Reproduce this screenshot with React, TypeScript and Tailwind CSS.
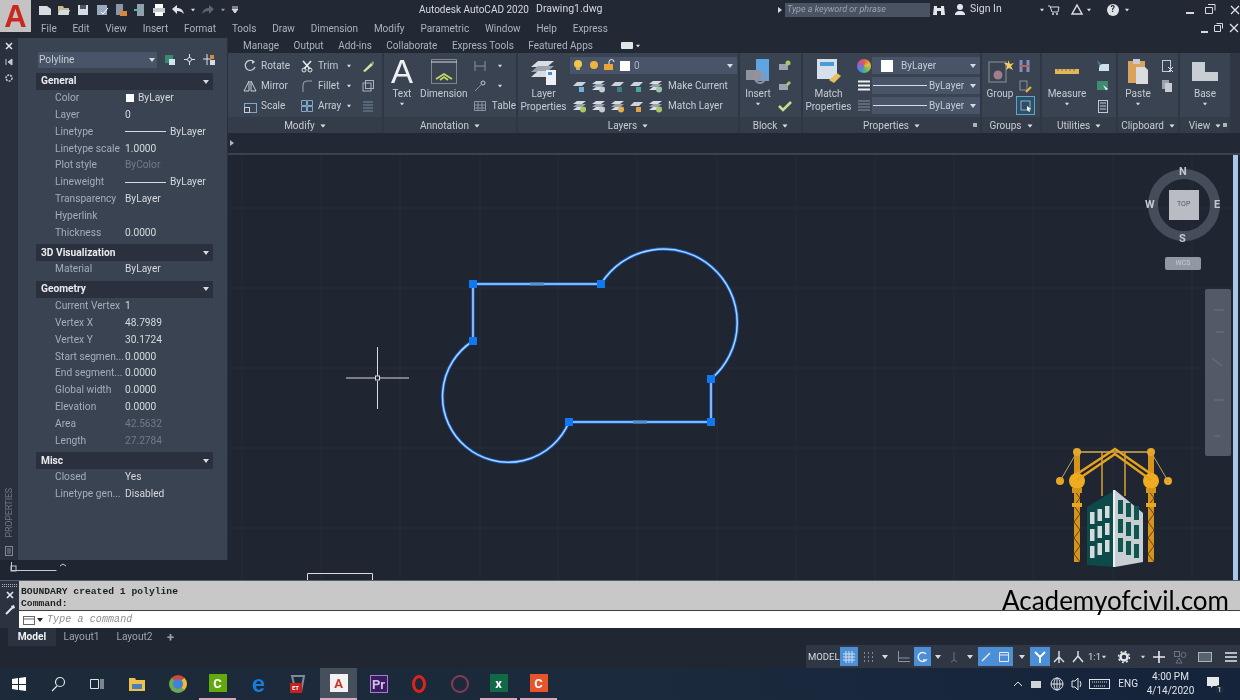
import React from "react";

type P = { children?: React.ReactNode; w?: number; h?: number; className?: string };
const S = ({ children, w = 14, h = 14, className = "" }: P) => (
  <svg width={w} height={h} viewBox={`0 0 ${w} ${h}`} fill="none" className={`shrink-0 ${className}`}>{children}</svg>
);
const Tri = ({ className = "" }: { className?: string }) => (
  <svg width="6" height="4" viewBox="0 0 6 4" className={`shrink-0 ${className}`}><path d="M0 0h6L3 4z" fill="#d7dbe0" /></svg>
);
const Stack = ({ a = "#7fb069", b = "#d8dde3" }: { a?: string; b?: string }) => (
  <S w={15} h={14}>
    <path d="M5 2h9l-4 3H1z" fill={b} /><path d="M5 5h9l-4 3H1z" fill="#9aa3ae" /><path d="M5 8h9l-4 3H1z" fill={b} />
    <circle cx="11" cy="10.5" r="3" fill={a} />
  </S>
);
const Lay = ({ a = "#66b6c8" }: { a?: string }) => (
  <S w={15} h={14}><path d="M5 3h9l-4 4H1z" fill="#cdd3da" /><rect x="7" y="8" width="5" height="5" fill={a} /></S>
);

function Tool({ icon, label, arrow, w, x = 0 }: { icon: React.ReactNode; label?: string; arrow?: boolean; w?: number; x?: number }) {
  return (
    <div className="flex h-5 items-center" style={{ width: w, marginLeft: x }}>
      <span className="flex w-[17px] shrink-0 justify-center">{icon}</span>
      {label && <span className="ml-[3px] whitespace-nowrap text-[#c6ccd4]">{label}</span>}
      {arrow && <Tri className="ml-auto mr-[7px] scale-75" />}
    </div>
  );
}
function Large({ icon, lines, arrow, w }: { icon: React.ReactNode; lines: string[]; arrow?: boolean; w: number }) {
  return (
    <div className="flex shrink-0 flex-col items-center" style={{ width: w }}>
      <div className="flex h-[31px] items-center justify-center">{icon}</div>
      {lines.map((l) => <div key={l} className="h-[13px] whitespace-nowrap leading-[13px] text-[#c6ccd4]">{l}</div>)}
      {arrow && <Tri className="mt-[2px] scale-75" />}
    </div>
  );
}
function RPanel({ title, w, children, dot, pl = 0 }: { title: string; w: number; children: React.ReactNode; dot?: boolean; pl?: number }) {
  return (
    <div className="flex h-full shrink-0 flex-col border-r-2 border-[#2f3644] bg-[#3a4352]" style={{ width: w }}>
      <div className="flex h-[64px] items-start pt-[3px]" style={{ paddingLeft: pl }}>{children}</div>
      <div className="relative flex h-[16px] items-center justify-center gap-[5px] bg-[#343c4a] pt-[1px] text-[#c6ccd4]">
        {title}<Tri className="scale-90" />
        {dot && <span className="absolute right-[3px] top-[6px] h-[4px] w-[4px] bg-[#aab2bc]" />}
      </div>
    </div>
  );
}
function Combo({ children, w }: { children: React.ReactNode; w: number }) {
  return (
    <div className="flex h-[17px] items-center bg-[#4a5468]" style={{ width: w }}>
      {children}
      <Tri className="ml-auto mr-1" />
    </div>
  );
}

const Prop = ({ l, v, dim, line, swatch }: { l: string; v?: string; dim?: boolean; line?: boolean; swatch?: boolean }) => (
  <div className="flex h-[16.8px] items-center whitespace-nowrap pl-[19px]">
    <span className="w-[70px] text-[#a4adba]">{l}</span>
    <span className={`flex items-center ${dim ? "text-[#727b8a]" : "text-[#d6dade]"}`}>
      {line && <span className="mr-[4px] block h-px w-[41px] bg-[#d8dce2]" />}
      {swatch && <span className="ml-[1px] mr-[4px] block h-[8px] w-[8px] bg-white" />}
      {v}
    </span>
  </div>
);
const Head = ({ t }: { t: string }) => (
  <div className="mt-[3px] flex h-[17px] items-center justify-between bg-[#2a303d] pl-[5px] pr-[4px] font-bold text-[#e8eaed]">
    {t}<Tri />
  </div>
);

const Bar = ({ on, w, children }: { on?: boolean; w: number; children?: React.ReactNode }) => (
  <span className={`flex h-[19px] shrink-0 items-center justify-center ${on ? "bg-[#4c8fd6]" : ""}`} style={{ width: w }}>{children}</span>
);

function Windows() {
  return (
    <S w={16} h={16}><path d="M1 3l6-1v6H1zM8 2l7-1v7H8zM1 9h6v5l-6-1zM8 9h7v6l-7-1z" fill="#fff" /></S>
  );
}
function Sq({ bg, t, c = "#fff", cls = "" }: { bg: string; t: string; c?: string; cls?: string }) {
  return <span className={`flex h-[18px] w-[18px] items-center justify-center text-[13px] font-bold leading-none ${cls}`} style={{ background: bg, color: c }}>{t}</span>;
}
const Slot = ({ x, on, u, children }: { x: number; on?: boolean; u?: boolean; children: React.ReactNode }) => (
  <span className={`flex h-[32px] w-[37px] shrink-0 items-center justify-center ${on ? "bg-[#46505c]" : ""} ${u ? "border-b-2 border-[#d9a8c0]" : ""}`} style={{ marginLeft: x }}>{children}</span>
);

function Logo() {
  const win: React.ReactNode[] = [];
  [0, 1, 2].forEach((r) => [0, 1, 2].forEach((c) => {
    const lx = 1090 + c * 7.5;
    win.push(<rect key={`l${r}${c}`} x={lx} y={512 + r * 17 - c * 3} width="4.5" height="12" fill="#d5dadd" />);
    const rx = 1118 + c * 8;
    win.push(<rect key={`r${r}${c}`} x={rx} y={500 + r * 19 + c * 3} width="5" height="14" fill="#0f5550" />);
  }));
  return (
    <g>
      {[1077, 1151].map((x) => (
        <g key={x}>
          <rect x={x - 3} y={452} width="6" height="110" fill="#d8941a" />
          <path d={`M${x - 3} 490 l6 8 l-6 8 l6 8 l-6 8 l6 8 l-6 8 l6 8 l-6 8 l6 8`} stroke="#5b4312" strokeWidth="1" />
          <rect x={x - 5} y={503} width="10" height="4" fill="#e9a822" />
          <circle cx={x} cy={452} r="4" fill="#e9a822" />
          <circle cx={x} cy={481} r="8" fill="#f0ac20" />
          <rect x={x - 5} y={488} width="10" height="5" fill="#d8941a" />
        </g>
      ))}
      <circle cx="1060" cy="481" r="4" fill="#e9a822" /><circle cx="1168" cy="481" r="4" fill="#e9a822" />
      <path d="M1077 452h74" stroke="#d9ad55" strokeWidth="1.5" />
      <path d="M1077 480L1115 454L1151 480M1077 474L1115 449L1151 474" stroke="#e5a31f" strokeWidth="2.5" />
      <path d="M1060 481L1077 452M1168 481L1151 452" stroke="#b9a26a" strokeWidth="1" />
      <path d="M1102 452v44M1125 452v44" stroke="#d8a030" strokeWidth="1.5" />
      <path d="M1087 507L1115 490V567L1087 565Z" fill="#0d4a49" />
      <path d="M1115 490L1143 513V562L1115 567Z" fill="#c9ced3" />
      <path d="M1114 490v77" stroke="#eef0f2" strokeWidth="2" />
      {win}
    </g>
  );
}

function Drawing() {
  const xs = [242, 321, 400, 480, 558, 637, 717, 796, 875, 954, 1033, 1113, 1192];
  const ys = [208, 288, 368, 448, 528];
  const shape = "M473 284H601A73.6 73.6 0 1 1 711 379V422H569A65.8 65.8 0 1 1 473 341Z";
  const grips = [[473, 284], [601, 284], [473, 341], [711, 379], [711, 422], [569, 422]];
  const mids = [[537, 284], [640, 422]];
  return (
    <svg className="absolute inset-0 h-full w-full" viewBox="228 155 1012 425" fill="none">
      {xs.map((x) => <path key={x} d={`M${x} 155V580`} stroke="#272e3b" />)}
      {ys.map((y) => <path key={y} d={`M228 ${y}H1240`} stroke="#272e3b" />)}
      <path d={shape} stroke="#0f5fc8" strokeWidth="3.4" />
      <path d={shape} stroke="#b4d2f8" strokeWidth="1.5" />
      {grips.map(([x, y]) => <rect key={`${x}${y}`} x={x - 4} y={y - 4} width="8" height="8" fill="#1278f0" />)}
      {mids.map(([x, y]) => <rect key={x} x={x - 7} y={y - 1.5} width="14" height="3" fill="#5d92c4" />)}
      <path d="M346 378H375M380 378H409M377.500 347V376M377.500 381V409" stroke="#d8dbe0" />
      <rect x="375.500" y="376" width="4" height="4" stroke="#d8dbe0" />
      <path d="M307.500 580V573.500H372.500V580" stroke="#d8dbe0" />
      <circle cx="1184" cy="205" r="31" stroke="#464d5a" strokeWidth="10" />
      <rect x="1169" y="190" width="30" height="30" fill="#b9bdc3" />
      <rect x="1205" y="289" width="26" height="167" rx="2" fill="#535a67" />
      <path d="M1214 310h10M1216 332h8M1212 358l10 8M1214 400h10M1214 436h6" stroke="#656c79" strokeWidth="1.5" />
      <Logo />
    </svg>
  );
}

export default function App() {
  const menu = ["File", "Edit", "View", "Insert", "Format", "Tools", "Draw", "Dimension", "Modify", "Parametric", "Window", "Help", "Express"];
  const tabs = ["Manage", "Output", "Add-ins", "Collaborate", "Express Tools", "Featured Apps"];
  return (
    <div className="flex h-[700px] w-[1240px] flex-col overflow-hidden bg-[#1f2531] font-['Roboto',sans-serif] text-[10px] leading-none text-[#c6ccd4] blur-[0.35px]">
      {/* title + menu */}
      <div className="flex h-[38px] shrink-0 bg-[#222935]">
        <div className="flex h-[32px] w-[31px] shrink-0 items-center justify-center bg-[#c4c2c2]">
          <span className="font-['Liberation_Sans',sans-serif] text-[31px] font-bold leading-none text-[#c8281e]">A</span>
        </div>
        <div className="flex min-w-0 flex-1 flex-col">
          <div className="flex h-[19px] items-center">
            <div className="ml-[7px] flex w-[208px] items-center gap-[5px]">
              <S w={14}><path d="M1 3h8l4 3v6H1z" fill="#d7dce2" /></S>
              <S w={14}><path d="M1 3h5l1 2h5v7H1z" fill="#c8b98e" /><path d="M3 7h10l-2 5H1z" fill="#d7dce2" /></S>
              <S w={14}><rect x="2" y="2" width="10" height="10" fill="#d7dce2" /><rect x="4" y="2" width="6" height="4" fill="#4b5563" /></S>
              <S w={14}><rect x="2" y="2" width="10" height="10" fill="#9aa8c0" /><path d="M6 9l2 2 5-6" stroke="#fff" /></S>
              <S w={14}><rect x="2" y="1" width="7" height="11" fill="#8c96a6" /><rect x="6" y="8" width="7" height="5" fill="#d9883a" /></S>
              <S w={14}><rect x="4" y="1" width="7" height="12" fill="#93a0ad" /><path d="M1 7h6" stroke="#58b6a8" strokeWidth="2" /></S>
              <S w={14}><rect x="3" y="1" width="8" height="4" fill="#fff" /><rect x="1" y="5" width="12" height="5" fill="#c8ccd2" /><rect x="3" y="9" width="8" height="4" fill="#fff" /></S>
              <S w={14}><path d="M1 6l5-4v3c4 0 6 2 7 6-2-2-4-3-7-3v3z" fill="#e0e4e8" /></S>
              <Tri className="scale-75" />
              <S w={14}><path d="M13 6L8 2v3c-4 0-6 2-7 6 2-2 4-3 7-3v3z" fill="#5b6472" /></S>
              <Tri className="scale-75 opacity-60" />
              <S w={8}><path d="M1 4h6M1 6h6L4 10z" fill="#d7dbe0" stroke="#d7dbe0" /></S>
            </div>
            <span className="ml-[173px] w-[117px] whitespace-nowrap text-[#d5d9de]">Autodesk AutoCAD 2020</span>
            <span className="w-[70px] whitespace-nowrap text-[10.5px] text-[#d5d9de]">Drawing1.dwg</span>
            <Tri className="ml-[171px] -rotate-90" />
            <div className="ml-[2px] flex h-[14px] w-[145px] items-center bg-[#4a5361] pl-[2px] text-[9px] italic text-[#9aa3b0]">Type a keyword or phrase</div>
            <S w={14} className="ml-[2px]"><path d="M2 3h3v9H1zM9 3h3l1 9H9zM5 5h4v3H5z" fill="#e3e6ea" /></S>
            <S w={14} className="ml-[7px]"><circle cx="7" cy="4" r="3" fill="#e3e6ea" /><path d="M2 12c0-3 2-4 5-4s5 1 5 4z" fill="#e3e6ea" /></S>
            <span className="ml-[3px] whitespace-nowrap text-[10.5px] text-[#d5d9de]">Sign In</span>
            <Tri className="ml-[37px] scale-75" />
            <S w={14} className="ml-[2px]"><path d="M1 3h2l2 6h6l1-5H4" stroke="#d7dbe0" /><circle cx="6" cy="11" r="1" fill="#d7dbe0" /><circle cx="10" cy="11" r="1" fill="#d7dbe0" /></S>
            <S w={14} className="ml-[9px]"><path d="M7 2l5 9H2z" stroke="#d7dbe0" strokeWidth="1.5" /></S>
            <Tri className="ml-[2px] scale-75" />
            <span className="ml-[15px] flex h-[12px] w-[12px] items-center justify-center rounded-full bg-[#dfe3e7] text-[9px] font-bold text-[#222935]">?</span>
            <Tri className="ml-[5px] scale-75" />
            <span className="ml-auto block h-[2px] w-[8px] translate-y-[3px] bg-[#d7dbe0]" />
            <S w={12} className="ml-[10px]"><path d="M4 1.500h7v6M1.500 4.500h7v6h-7z" stroke="#d7dbe0" /></S>
            <S w={10} h={10} className="ml-[14px]"><path d="M1 1l8 8M9 1l-8 8" stroke="#e3e6ea" strokeWidth="1.2" /></S>
          </div>
          <div className="flex h-[19px] items-center">
            <div className="ml-[10px] flex gap-[15.8px] whitespace-nowrap text-[#aab3bf]">
              {menu.map((m) => <span key={m}>{m}</span>)}
            </div>
            <span className="ml-auto block h-[2px] w-[7px] translate-y-[3px] bg-[#d7dbe0]" />
            <S w={11} className="ml-[5px]"><path d="M3.500 1.500h6v5M1.500 3.500h6v6h-6z" stroke="#d7dbe0" /></S>
            <S w={12} className="ml-[4px]"><path d="M2 2l8 8M10 2l-8 8" stroke="#e3e6ea" strokeWidth="1.2" /></S>
          </div>
        </div>
      </div>

      {/* main */}
      <div className="flex min-h-0 flex-1">
        {/* palette */}
        <div className="flex w-[228px] shrink-0 flex-col">
          <div className="flex h-[522px] border-r border-[#2a303c]">
            <div className="flex w-[18px] shrink-0 flex-col items-center bg-[#2a313e] pt-[3px]">
              <S w={10} h={10}><path d="M2 2l6 6M8 2l-6 6" stroke="#e3e6ea" strokeWidth="1.5" /></S>
              <S w={10} h={10} className="mt-[6px]"><path d="M2 2v6M8 2L4 5l4 3z" fill="#c4cad2" stroke="#c4cad2" /></S>
              <S w={10} h={10} className="mt-[6px]"><circle cx="5" cy="5" r="3" stroke="#c4cad2" strokeWidth="1.5" strokeDasharray="2 1" /></S>
              <div className="mt-auto flex flex-col items-center">
                <span className="mb-[8px] rotate-180 whitespace-nowrap text-[9px] tracking-tight text-[#6f7887] [writing-mode:vertical-rl]">PROPERTIES</span>
                <S w={10} h={12} className="mb-[3px]"><rect x="1.500" y="1.500" width="7" height="9" stroke="#7e8794" /><path d="M3 4h4M3 6h4M3 8h4" stroke="#7e8794" /></S>
              </div>
            </div>
            <div className="w-[209px] bg-[#3a4352] text-[10.2px]">
              <div className="ml-[20px] mt-[14px] flex h-[16px] items-center">
                <div className="flex h-[16px] w-[119px] items-center bg-[#4a5468] pl-[1px] text-[#c6ccd4]">Polyline<Tri className="ml-auto mr-[2px]" /></div>
                <S w={14} className="ml-[6px]"><rect x="2" y="2" width="8" height="8" fill="#3a8a72" /><rect x="6" y="6" width="6" height="6" fill="#cfe4ef" /></S>
                <S w={13} className="ml-[6px]"><path d="M6.500 1v11M1 6.500h11" stroke="#dfe3e7" /><circle cx="6.500" cy="6.500" r="2" fill="#3a4352" stroke="#dfe3e7" /></S>
                <S w={14} className="ml-[6px]"><path d="M5 1v11M1 6h8" stroke="#dfe3e7" /><rect x="8" y="2" width="4" height="4" fill="#d9883a" /><rect x="8" y="7" width="5" height="5" fill="#d7dbe0" /></S>
              </div>
              <div className="ml-[18px] mt-[5px] w-[177px]">
                <Head t="General" />
                <Prop l="Color" v="ByLayer" swatch />
                <Prop l="Layer" v="0" />
                <Prop l="Linetype" v="ByLayer" line />
                <Prop l="Linetype scale" v="1.0000" />
                <Prop l="Plot style" v="ByColor" dim />
                <Prop l="Lineweight" v="ByLayer" line />
                <Prop l="Transparency" v="ByLayer" />
                <Prop l="Hyperlink" />
                <Prop l="Thickness" v="0.0000" />
                <Head t="3D Visualization" />
                <Prop l="Material" v="ByLayer" />
                <Head t="Geometry" />
                <Prop l="Current Vertex" v="1" />
                <Prop l="Vertex X" v="48.7989" />
                <Prop l="Vertex Y" v="30.1724" />
                <Prop l="Start segmen..." v="0.0000" />
                <Prop l="End segment..." v="0.0000" />
                <Prop l="Global width" v="0.0000" />
                <Prop l="Elevation" v="0.0000" />
                <Prop l="Area" v="42.5632" dim />
                <Prop l="Length" v="27.2784" dim />
                <Head t="Misc" />
                <Prop l="Closed" v="Yes" />
                <Prop l="Linetype gen..." v="Disabled" />
              </div>
            </div>
          </div>
          <div className="h-[20px] pl-[8px] pt-[1px]">
            <S w={60} h={12}><path d="M3.500 1v8.500h8M3.500 9.500h45" stroke="#c4cad2" /><path d="M52 5l3-2 3 2" stroke="#c4cad2" /><rect x="3" y="5" width="5" height="5" stroke="#c4cad2" /></S>
          </div>
        </div>

        {/* right column */}
        <div className="flex min-w-0 flex-1 flex-col">
          <div className="flex h-[15px] shrink-0 items-center bg-[#222935] pl-[15px] text-[#aab3bf]">
            <div className="flex gap-[14.5px] whitespace-nowrap">{tabs.map((t) => <span key={t}>{t}</span>)}</div>
            <span className="ml-[28px] block h-[7px] w-[12px] rounded-[1px] bg-[#e0e4e8]" />
            <Tri className="ml-[2px] scale-75" />
          </div>
          {/* ribbon */}
          <div className="flex h-[80px] shrink-0 bg-[#2f3644] pr-[8px]">
            <RPanel title="Modify" w={156} pl={13}>
              <div className="flex flex-col">
                <Tool w={57} icon={<S><path d="M11 3a5 5 0 1 0 1 5" stroke="#c8cdd4" strokeWidth="1.3" /><path d="M9 1l3 2-3 2" fill="#c8cdd4" /></S>} label="Rotate" />
                <Tool w={57} icon={<S><path d="M6 2v10H1zM8 2v10h5z" stroke="#c8cdd4" /></S>} label="Mirror" />
                <Tool w={57} icon={<S><rect x="1.500" y="4.500" width="12" height="9" stroke="#7fa8cc" /><rect x="1.500" y="8.500" width="5" height="5" stroke="#c8cdd4" /></S>} label="Scale" />
              </div>
              <div className="flex flex-col">
                <Tool w={61} icon={<S><path d="M3 2l7 8M11 2l-7 8" stroke="#e6e9ec" strokeWidth="1.6" /><circle cx="4" cy="11" r="2" stroke="#e6e9ec" /><circle cx="10" cy="11" r="2" stroke="#e6e9ec" /></S>} label="Trim" arrow />
                <Tool w={61} icon={<S><path d="M3 13V6q0-4 4-4h5" stroke="#9aa3ae" /></S>} label="Fillet" arrow />
                <Tool w={61} icon={<S><path d="M1.500 1.500h5v5h-5zM7.500 1.500h5v5h-5zM1.500 7.500h5v5h-5zM7.500 7.500h5v5h-5z" stroke="#7fa8cc" /></S>} label="Array" arrow />
              </div>
              <div className="flex flex-col">
                <Tool icon={<S><path d="M2 12L10 4l2 2-8 7z" fill="#d8e0a0" /><path d="M10 4l2-2 1 2-1 2z" fill="#7fb069" /></S>} />
                <Tool icon={<S><rect x="2" y="4" width="8" height="8" stroke="#aab2bc" /><rect x="4.500" y="1.500" width="8" height="8" stroke="#aab2bc" /></S>} />
                <Tool icon={<S><path d="M2 3h10M2 6h10M2 9h10M2 12h10" stroke="#6e8c9a" /></S>} />
              </div>
            </RPanel>
            <RPanel title="Annotation" w={134} pl={3}>
              <div className="flex w-[30px] flex-col items-center">
                <span className="h-[31px] font-['Liberation_Sans',sans-serif] text-[33px] leading-[31px] text-[#eef0f2]">A</span>
                <span className="h-[13px] leading-[13px]">Text</span>
                <Tri className="mt-[2px] scale-75" />
              </div>
              <Large w={54} lines={["Dimension"]} icon={<S w={28} h={27}><rect x="1.500" y="1.500" width="25" height="24" stroke="#80868f" /><path d="M1 4h26" stroke="#d7dbe0" /><path d="M6 21l8-5 8 5M10 22l4-3 4 3" stroke="#c4d860" strokeWidth="1.8" /></S>} />
              <div className="ml-[1px] flex flex-col">
                <Tool icon={<S><path d="M2 2v10M12 2v10M2 7h10" stroke="#8a929e" /></S>} arrow w={38} />
                <Tool icon={<S><circle cx="10" cy="4" r="2" stroke="#c4cad2" /><path d="M2 12l6-6" stroke="#8a929e" /></S>} arrow w={38} />
                <Tool icon={<S><path d="M1.500 2.500h11v9h-11zM1.500 6h11M1.500 9h11M5 3v8M9 3v8" stroke="#8a929e" /></S>} label="Table" />
              </div>
            </RPanel>
            <RPanel title="Layers" w={222}>
              <Large w={51} lines={["Layer", "Properties"]} icon={<S w={28} h={28}><path d="M8 3h16l-7 6H1z" fill="#d8dde3" /><path d="M8 8h16l-7 6H1z" fill="#9aa3ae" /><path d="M8 13h16l-7 6H1z" fill="#d8dde3" /><rect x="16" y="12" width="10" height="15" fill="#edf1f5" /><rect x="18" y="14" width="4" height="3" fill="#3f8fd8" /></S>} />
              <div className="flex flex-col">
                <div className="flex h-[20px] items-start pl-[1px] pt-[1px]">
                  <Combo w={167}>
                    <S w={12} className="ml-[2px]"><circle cx="6" cy="5" r="4" fill="#f3c64a" /><rect x="4" y="9" width="4" height="2" fill="#c9b36a" /></S>
                    <S w={12} className="ml-[4px]"><circle cx="6" cy="6" r="4" fill="#efb43c" /></S>
                    <S w={12} className="ml-[3px]"><rect x="1" y="5" width="9" height="6" fill="#e9a53a" /><path d="M6 5V3a2.500 2.500 0 0 1 5 0" stroke="#e6e9ec" /></S>
                    <span className="ml-[5px] block h-[10px] w-[10px] bg-white" />
                    <span className="ml-[4px] text-[#aab2bc]">0</span>
                  </Combo>
                </div>
                <div className="flex h-5 items-center gap-[4px] pl-[3px]">
                  <Lay a="#6fb1d8" /><Stack a="#c7ccd2" /><Lay a="#3d7f8a" /><Lay a="#4aa59b" /><Stack a="#9cc7a6" />
                  <span className="ml-[1px] whitespace-nowrap">Make Current</span>
                </div>
                <div className="flex h-5 items-center gap-[4px] pl-[3px]">
                  <Stack a="#a8c86a" /><Stack a="#c7ccd2" /><Stack a="#e0b050" /><Lay a="#e0a050" /><Stack a="#a8c86a" />
                  <span className="ml-[1px] whitespace-nowrap">Match Layer</span>
                </div>
              </div>
            </RPanel>
            <RPanel title="Block" w={63}>
              <Large w={36} arrow lines={["Insert"]} icon={<S w={26} h={28}><path d="M11 1h13v22H11z" fill="#5ea6e2" /><rect x="1" y="12" width="15" height="10" fill="#8d939c" /><circle cx="15" cy="20" r="5" stroke="#a88a98" strokeWidth="2" /></S>} />
              <div className="flex flex-col">
                <Tool icon={<S><rect x="1" y="5" width="9" height="6" fill="#9aa3ae" /><circle cx="10" cy="4" r="2.500" fill="#a8c86a" /></S>} />
                <Tool icon={<S><rect x="1" y="5" width="9" height="6" fill="#9aa3ae" /><path d="M8 5l3-3 2 2-3 3z" fill="#a8c86a" /></S>} />
                <Tool icon={<S><path d="M1 7l4 4 8-8" stroke="#c5e090" strokeWidth="2.500" /></S>} />
              </div>
            </RPanel>
            <RPanel title="Properties" w={179} dot>
              <Large w={51} lines={["Match", "Properties"]} icon={<S w={28} h={27}><rect x="2" y="1" width="20" height="20" fill="#d5e0ea" /><rect x="5" y="4" width="14" height="4" fill="#4b9ad8" /><path d="M14 22l8-7 4 3-7 7z" fill="#e8c060" /></S>} />
              <div className="ml-[1px] mt-[1px] flex flex-col gap-[3px]">
                {[0, 1, 2].map((i) => (
                  <div key={i} className="flex h-[17px] items-center">
                    <span className="flex w-[17px] justify-center">
                      {i === 0 ? <span className="block h-[14px] w-[14px] rounded-full bg-[conic-gradient(#e25b4c,#e8b93c,#6cbf5a,#3f8fd8,#a25bc8,#e25b4c)]" /> :
                        <S w={14}><path d={i === 1 ? "M1 2.500h12M1 6.500h12M1 10.500h12" : "M1 2h12M1 5h12M1 8h12M1 11h12"} stroke={i === 1 ? "#eef0f2" : "#8a929e"} strokeWidth={i === 1 ? 2 : 1} /></S>}
                    </span>
                    <Combo w={108}>
                      {i === 0 ? <><span className="ml-[9px] block h-[12px] w-[12px] bg-white" /><span className="ml-[8px]">ByLayer</span></> :
                        <><span className="ml-[1px] block h-px w-[54px] bg-[#d8dce2]" /><span className="ml-[2px]">ByLayer</span></>}
                    </Combo>
                  </div>
                ))}
              </div>
            </RPanel>
            <RPanel title="Groups" w={60}>
              <div className="flex w-[34px] flex-col items-center pl-[2px]">
                <div className="flex h-[31px] items-center"><S w={28} h={27}><rect x="3" y="4" width="17" height="20" stroke="#8a929e" /><circle cx="12" cy="17" r="4.500" fill="#a07d8a" /><path d="M22 2l2 4 4-1-3 3 2 4-4-2-3 2 1-4-3-3 4 0z" fill="#efcb5e" /></S></div>
                <span className="h-[13px] leading-[13px]">Group</span>
              </div>
              <div className="flex flex-col">
                <Tool icon={<S><path d="M3 1v12M10 1v12" stroke="#7f8fc0" strokeWidth="3" /><rect x="2" y="6" width="9" height="2" fill="#c45a5a" /></S>} />
                <Tool icon={<S><rect x="2" y="2" width="7" height="9" stroke="#8a929e" /><path d="M8 13l5-5" stroke="#e8b93c" strokeWidth="2" /></S>} />
                <span className="flex h-[19px] w-[19px] items-center justify-center border border-[#5ea6c8] bg-[#2f4f66]"><S><rect x="2" y="2" width="9" height="9" stroke="#8fb0c8" /><path d="M8 7l4 3-2 .5 1 2-1 .5-1-2-1 1z" fill="#fff" /></S></span>
              </div>
            </RPanel>
            <RPanel title="Utilities" w={76}>
              <Large w={50} arrow lines={["Measure"]} icon={<S w={24} h={12}><rect x="0" y="3" width="24" height="5" fill="#e0b85a" /><path d="M3 3v2M7 3v2M11 3v2M15 3v2M19 3v2" stroke="#7a6a3a" /></S>} />
              <div className="ml-[2px] flex flex-col">
                <Tool icon={<S><rect x="3" y="5" width="10" height="7" fill="#cfe0ea" /><path d="M1 1l5 5-2 0 0 3z" fill="#3e8a9e" /></S>} />
                <Tool icon={<S><rect x="1" y="2" width="11" height="9" fill="#3e8a72" /><path d="M7 6l5 4-2 1 1 2z" fill="#fff" /></S>} />
                <Tool icon={<S><rect x="2.500" y="1.500" width="9" height="12" stroke="#c4cad2" /><path d="M4 4h6M4 7h6M4 10h6" stroke="#c4cad2" /></S>} />
              </div>
            </RPanel>
            <RPanel title="Clipboard" w={62}>
              <Large w={40} arrow lines={["Paste"]} icon={<S w={22} h={27}><rect x="1" y="3" width="17" height="22" fill="#d9a35c" /><rect x="6" y="1" width="7" height="5" fill="#c8ccd2" /><path d="M9 9h9l3 3v14H9z" fill="#d9dce0" /></S>} />
              <div className="flex flex-col">
                <Tool icon={<S><rect x="2.500" y="1.500" width="8" height="11" stroke="#c4cad2" /><path d="M8 8l5 5M13 8l-5 5" stroke="#dfe3e7" /></S>} />
                <Tool icon={<S><rect x="2" y="1" width="7" height="9" fill="#9aa3ae" /><rect x="5" y="4" width="7" height="9" fill="#c8ccd2" /></S>} />
              </div>
            </RPanel>
            <RPanel title="View" w={52} dot>
              <Large w={50} arrow lines={["Base"]} icon={<S w={28} h={21}><path d="M1 1h13v10h13v9H1z" fill="#c9ced3" /></S>} />
            </RPanel>
          </div>
          {/* file tab strip */}
          <div className="flex h-[20px] shrink-0 items-start bg-[#222935] pl-[1px] pt-[8px]"><Tri className="-rotate-90 opacity-80" /></div>
          <div className="h-[2px] shrink-0 bg-[#3a4352]" />
          {/* canvas */}
          <div className="relative min-h-0 flex-1 overflow-hidden">
            <Drawing />
            <span className="absolute left-[951px] top-[11px] text-[11px] font-bold text-[#c5c9cf]">N</span>
            <span className="absolute left-[951px] top-[78px] text-[11px] font-bold text-[#c5c9cf]">S</span>
            <span className="absolute left-[917px] top-[44px] text-[11px] font-bold text-[#c5c9cf]">W</span>
            <span className="absolute left-[986px] top-[44px] text-[11px] font-bold text-[#c5c9cf]">E</span>
            <span className="absolute left-[949px] top-[46px] text-[7px] text-[#4d5560]">TOP</span>
            <span className="absolute left-[937px] top-[102px] flex h-[13px] w-[36px] items-center justify-center rounded-[2px] bg-[#9298a2] text-[7px] text-[#c7ccd2]">WCS</span>
            <div className="absolute bottom-0 right-[2px] top-0 w-[5px] bg-[#a9c8e8]" />
          </div>
        </div>
      </div>

      {/* command */}
      <div className="relative h-[48px] shrink-0 border-t border-[#55606e] font-['Liberation_Mono',monospace] text-[9.7px]">
        <div className="flex h-full">
          <div className="flex w-[19px] shrink-0 flex-col items-center bg-[#2c3340] pt-[3px]">
            <span className="mb-[3px] block h-[3px] w-[15px] border-y border-dotted border-[#aab2bc]" />
            <S w={10} h={10}><path d="M2 2l6 6M8 2l-6 6" stroke="#e6e9ec" strokeWidth="1.6" /></S>
            <S w={12} h={12} className="mt-[4px]"><path d="M2 10l6-6" stroke="#e6e9ec" strokeWidth="2" /><path d="M7 2l3-1 1 3-3 1z" fill="#e6e9ec" /></S>
          </div>
          <div className="flex flex-1 flex-col">
            <div className="h-[30px] border-b border-[#3a3f47] bg-[#c8c8c8] pl-[2px] pt-[5px] font-bold text-[#1d1f22]">
              <div className="h-[12px] leading-[12px]">BOUNDARY created 1 polyline</div>
              <div className="h-[12px] leading-[12px]">Command:</div>
            </div>
            <div className="flex h-[17px] items-center bg-white pl-[3px] italic text-[#8d8d8d]">
              <S w={14} h={12}><rect x="1.500" y="2.500" width="11" height="8" stroke="#666" /><path d="M1 5h12" stroke="#666" /></S>
              <Tri className="ml-[1px] invert" />
              <span className="ml-[4px] text-[10px] tracking-[0.1px]">Type a command</span>
            </div>
          </div>
        </div>
        <span className="absolute right-[11px] top-[4px] font-['Lato',sans-serif] text-[26px] leading-[30px] text-black">Academyofcivil.com</span>
      </div>

      {/* layout tabs + status */}
      <div className="flex h-[40px] shrink-0 justify-between bg-[#202733]">
        <div className="flex h-[18px] items-center pl-[8px] text-[10.2px]">
          <span className="flex h-full w-[48px] items-center justify-center bg-[#2c3340] font-bold text-[#eef0f2]">Model</span>
          <span className="ml-[4px] w-[43px] text-center text-[#9aa3af]">Layout1</span>
          <span className="ml-[10px] w-[43px] text-center text-[#9aa3af]">Layout2</span>
          <span className="ml-[11px] text-[13px] font-bold text-[#9aa3af]">+</span>
        </div>
        <div className="mt-[17px] flex h-[23px] w-[434px] items-center bg-[#2f3745] pl-[2px] text-[#d7dbe0]">
          <span className="w-[40px] text-[9.500px]">MODEL</span>
          <Bar on w={18}><S w={14}><path d="M1 4h12M1 7h12M1 10h12M4 1v12M7 1v12M10 1v12" stroke="#cfe0f2" /></S></Bar>
          <Bar w={20}><S w={12} h={12}><path d="M2 2h1M6 2h1M10 2h1M2 6h1M6 6h1M10 6h1M2 10h1M6 10h1M10 10h1" stroke="#d7dbe0" /></S></Bar>
          <Bar w={14}><Tri /></Bar>
          <Bar w={22}><S w={14}><path d="M2.500 1v10.500H14M2.500 8h11" stroke="#8b95a3" /></S></Bar>
          <Bar on w={17}><S w={12} h={12}><path d="M10 3a4.500 4.500 0 1 0 0 6h-3" stroke="#e4edf6" strokeWidth="1.500" /></S></Bar>
          <Bar w={14}><Tri /></Bar>
          <Bar w={18}><S w={10} h={12}><path d="M5 1v8M2 11l3-2 3 2" stroke="#6b7482" /></S></Bar>
          <Bar w={15}><Tri /></Bar>
          <Bar on w={17}><S w={12} h={12}><path d="M2 10l8-8" stroke="#e4edf6" strokeWidth="1.400" /></S></Bar>
          <span className="w-[2px]" />
          <Bar on w={18}><S w={12} h={14}><path d="M1.500 2.500h9v9h-9z" stroke="#e4edf6" /><path d="M1 5h10" stroke="#e4edf6" /></S></Bar>
          <Bar w={17}><Tri /></Bar>
          <Bar on w={20}><S w={14}><path d="M7 7V13M7 7L2 2M7 7l5-5" stroke="#fff" strokeWidth="1.800" /></S></Bar>
          <Bar w={18}><S w={14}><path d="M7 7V13M7 7L2 12M7 7l5 5M7 7V1" stroke="#dfe3e7" strokeWidth="1.400" /></S></Bar>
          <Bar w={20}><S w={14}><path d="M7 6v-5M7 6L2 12M7 6l5 6" stroke="#dfe3e7" strokeWidth="1.400" /></S></Bar>
          <span className="w-[14px] text-[9.500px]">1:1</span>
          <Tri className="scale-75" />
          <Bar w={33}><S w={14}><circle cx="7" cy="7" r="3.500" stroke="#e4e7ea" strokeWidth="2.500" /><circle cx="7" cy="7" r="5.500" stroke="#e4e7ea" strokeWidth="1.500" strokeDasharray="2 2.300" /></S></Bar>
          <Tri className="scale-75" />
          <Bar w={26}><S w={14}><path d="M7 1v12M1 7h12" stroke="#e6e9ec" strokeWidth="1.600" /></S></Bar>
          <Bar w={16}><S w={14}><rect x="1.500" y="1.500" width="5" height="5" stroke="#6b7482" /><circle cx="10.500" cy="5" r="2.500" stroke="#6b7482" /><path d="M6 8l3 5H3z" stroke="#6b7482" /></S></Bar>
          <Bar w={34}><S w={14} h={12}><rect x="0.500" y="1.500" width="13" height="9" fill="#59636f" stroke="#aab2bc" /></S></Bar>
          <Bar w={18}><S w={14}><path d="M1 3h12M1 7h12M1 11h12" stroke="#e4e7ea" strokeWidth="1.500" /></S></Bar>
        </div>
      </div>

      {/* taskbar */}
      <div className="flex h-[32px] shrink-0 items-center bg-gradient-to-r from-[#1c2a39] via-[#1b2a3c] to-[#15233b] text-white">
        <span className="flex w-[37px] justify-center"><Windows /></span>
        <Slot x={2}><S w={16} h={16}><circle cx="10" cy="6" r="4.500" stroke="#dfe3e7" strokeWidth="1.200" /><path d="M7 10l-5 5" stroke="#dfe3e7" strokeWidth="1.200" /></S></Slot>
        <Slot x={1}><S w={16} h={14}><path d="M2.500 2.500h8v9h-8zM13 2v10M15 2v10" stroke="#dfe3e7" /></S></Slot>
        <Slot x={4}><S w={18} h={16}><path d="M1 2h6l1 2h9v11H1z" fill="#edc14d" /><rect x="4" y="8" width="10" height="5" fill="#4a7fb8" /></S></Slot>
        <Slot x={4}><span className="block h-[18px] w-[18px] rounded-full border-[4px] border-[#6fa84f] bg-[#3f82d8] [border-right-color:#eebb3a] [border-top-color:#d8443a]" /></Slot>
        <Slot x={3} u><Sq bg="#63a80f" t="C" /></Slot>
        <Slot x={4}><span className="font-['Liberation_Sans',sans-serif] text-[24px] font-bold leading-none text-[#1a7ad8]">e</span></Slot>
        <Slot x={2}>
          <span className="relative flex h-[18px] w-[16px] items-end">
            <S w={16} h={18} className="absolute left-0 top-0"><path d="M2 1h12l-3 16H6z" stroke="#7d8b99" strokeWidth="2" /></S>
            <span className="relative flex h-[10px] w-[12px] items-center justify-center bg-[#c8201e] text-[6px] font-bold">ET</span>
          </span>
        </Slot>
        <Slot x={4} on u><Sq bg="#f2f2f2" t="A" c="#c5352b" /></Slot>
        <Slot x={3}><Sq bg="#3a1d5e" t="Pr" c="#d7b8ef" cls="border border-[#a77fd0] text-[10px]" /></Slot>
        <Slot x={3}><span className="block h-[18px] w-[14px] rounded-[50%] border-[3.500px] border-[#e0231c]" /></Slot>
        <Slot x={4}><span className="block h-[18px] w-[18px] rounded-full border-[2px] border-[#8a3a55]" /></Slot>
        <Slot x={2} u><Sq bg="#0f6a45" t="x" cls="text-[10px]" /></Slot>
        <Slot x={3} u><Sq bg="#e8552c" t="C" /></Slot>
        <div className="ml-auto flex items-center text-[10px] text-[#dfe3e7]">
          <S w={10} h={6} className="mr-[7px]"><path d="M1 5l4-4 4 4" stroke="#dfe3e7" /></S>
          <S w={12} h={10} className="mr-[8px]"><rect x="1" y="2" width="10" height="7" fill="#cfd4d9" /></S>
          <S w={14} className="mr-[7px]"><circle cx="7" cy="7" r="6" stroke="#dfe3e7" /><path d="M1 7h12M7 1v12" stroke="#dfe3e7" /><ellipse cx="7" cy="7" rx="3" ry="6" stroke="#dfe3e7" /></S>
          <S w={12} className="mr-[6px]"><path d="M1 4h3l3-3v12l-3-3H1z" stroke="#dfe3e7" /><path d="M9 4q2 3 0 6" stroke="#dfe3e7" /></S>
          <S w={21} h={12} className="mr-[8px]"><rect x="0.500" y="1.500" width="20" height="9" stroke="#dfe3e7" /><path d="M3 4h15M5 8h11" stroke="#dfe3e7" strokeDasharray="1 1" /></S>
          <span className="mr-[10px]">ENG</span>
          <div className="mr-[13px] flex w-[45px] flex-col items-center gap-[4px]">
            <span>4:00 PM</span><span>4/14/2020</span>
          </div>
          <div className="relative mr-[18px] h-[16px] w-[16px]">
            <S w={14}><path d="M1 1h12v9H7l-2 2v-2H1z" fill="#e6e9ec" /></S>
            <span className="absolute -bottom-[2px] -right-[2px] flex h-[9px] w-[9px] items-center justify-center rounded-full bg-[#1c2a3c] text-[8px]">1</span>
          </div>
        </div>
      </div>
    </div>
  );
}
